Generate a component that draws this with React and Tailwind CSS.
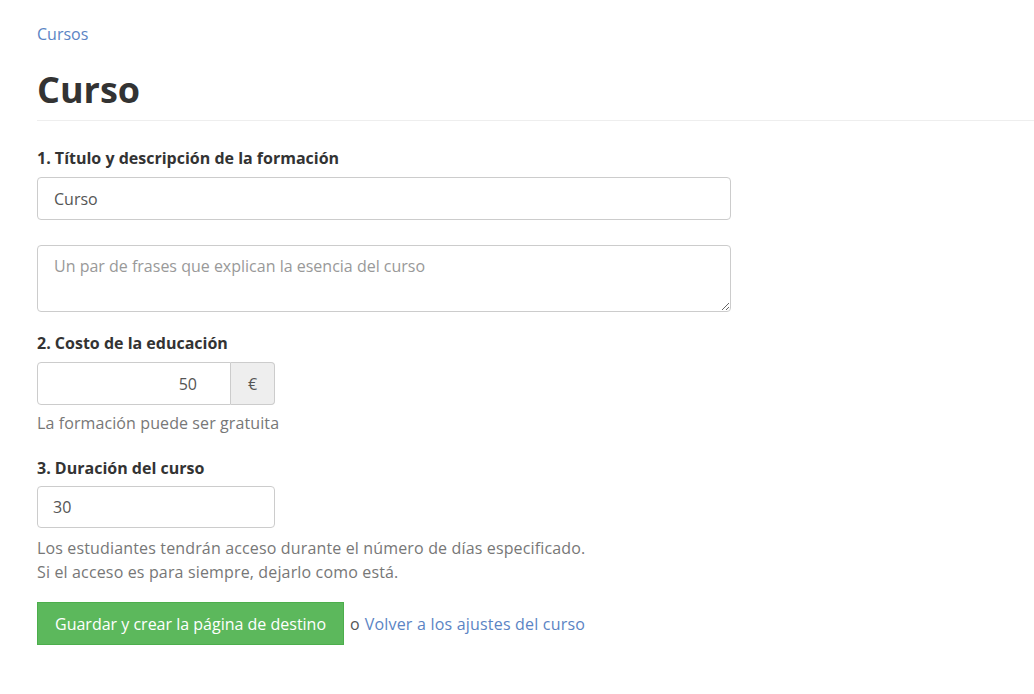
export default function App() {
  return (
    <div className="min-h-screen bg-white text-[#333] font-['Open_Sans',sans-serif] text-[16px] pl-[37px] overflow-hidden">
      <div className="pt-[24px] leading-[20px]">
        <a className="text-[#5b84c4]">Cursos</a>
      </div>
      <h1 className="mt-[26px] text-[36px] font-bold leading-[40px] text-[#333]">Curso</h1>
      <div className="mt-[10px] border-b border-[#eee]" />

      <form className="w-[694px] mt-[26px]">
        <label className="block font-bold leading-[22px] mb-[8px]">
          1. Título y descripción de la formación
        </label>
        <input
          defaultValue="Curso"
          className="block w-full h-[43px] rounded-[4px] border border-[#ccc] px-[16px] text-[16px] text-[#555] outline-none"
        />
        <textarea
          placeholder="Un par de frases que explican la esencia del curso"
          className="block w-full h-[67px] mt-[25px] rounded-[4px] border border-[#ccc] px-[16px] py-[8px] text-[16px] text-[#555] placeholder:text-[#999] outline-none"
        />

        <label className="block font-bold leading-[22px] mt-[20px] mb-[8px]">
          2. Costo de la educación
        </label>
        <div className="flex w-[238px] h-[43px]">
          <input
            defaultValue="50"
            className="w-[194px] h-full rounded-l-[4px] border border-[#ccc] px-[33px] text-right text-[16px] text-[#555] outline-none"
          />
          <span className="flex items-center justify-center w-[44px] h-full rounded-r-[4px] border border-l-0 border-[#ccc] bg-[#eee] text-[#555]">
            €
          </span>
        </div>
        <p className="mt-[7px] leading-[22px] text-[#777] tracking-[0.1px]">La formación puede ser gratuita</p>

        <label className="block font-bold leading-[22px] mt-[23px] mb-[7px]">
          3. Duración del curso
        </label>
        <input
          defaultValue="30"
          className="block w-[238px] h-[42px] rounded-[4px] border border-[#ccc] px-[15px] text-[16px] text-[#555] outline-none"
        />
        <p className="mt-[8px] leading-[24px] text-[#777] tracking-[0.15px]">
          Los estudiantes tendrán acceso durante el número de días especificado.
          <br />
          Si el acceso es para siempre, dejarlo como está.
        </p>

        <div className="flex items-center mt-[18px]">
          <button
            type="button"
            className="h-[43px] px-[17px] bg-[#5cb85c] border border-[#4cae4c] text-white text-[16px]"
          >
            Guardar y crear la página de destino
          </button>
          <span className="ml-[6px] text-[#555]">o</span>
          <a className="ml-[5px] text-[#5b84c4] tracking-[0.2px]">Volver a los ajustes del curso</a>
        </div>
      </form>
    </div>
  );
}
